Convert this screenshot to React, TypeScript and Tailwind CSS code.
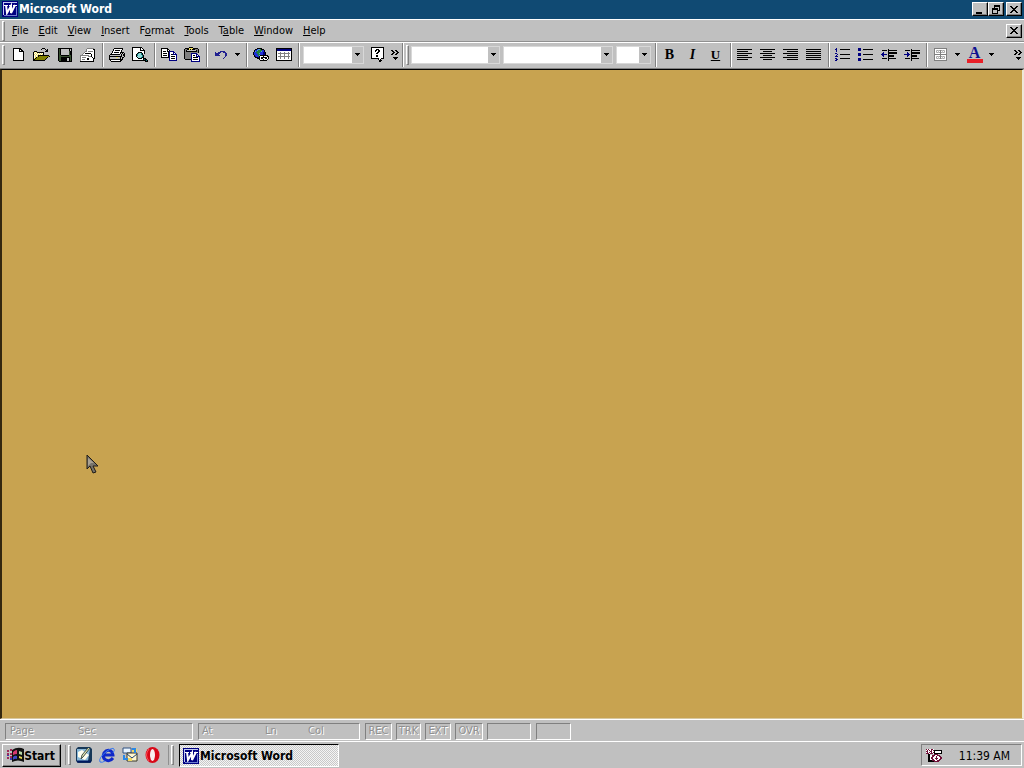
import React from "react";

const palette: Record<string, string> = {
  k: "#000000", w: "#ffffff", g: "#808080", s: "#c0c0c0", d: "#a8a8a8", y: "#f0e060", o: "#808000", v: "#385030",
  n: "#000080", b: "#2030d8", i: "#202090", t: "#107878", c: "#90d8d8", r: "#e01820", m: "#701038", l: "#50a0e0", e: "#208040",
};

function Pixels({ rows, className = "" }: { rows: string[]; className?: string }) {
  const w = Math.max(...rows.map((r) => r.length));
  return (
    <svg width={w} height={rows.length} viewBox={`0 0 ${w} ${rows.length}`} shapeRendering="crispEdges" className={`shrink-0 ${className}`} aria-hidden="true">
      {rows.flatMap((row, y) =>
        [...row].map((ch, x) => (palette[ch] ? <rect key={`${x}-${y}`} x={x} y={y} width="1" height="1" fill={palette[ch]} /> : null)),
      )}
    </svg>
  );
}

const art = {
  newDoc: ["kkkkkkkk", "kwwwwwkkk", "kwwwwwkwkk", "kwwwwwkkkkk", "kwwwwwwwwwk", "kwwwwwwwwwk", "kwwwwwwwwwk", "kwwwwwwwwwk", "kwwwwwwwwwk", "kwwwwwwwwwk", "kwwwwwwwwwk", "kwwwwwwwwwk", "kkkkkkkkkkk"],
  open: [".........kkk....", "........k...k.k.", ".............kk.", ".kkk........kkk.", "kywykkkkkkk.....", "kwywywywywk.....", "kywywywywyk.....", "kwywykkkkkkkkkkk", "kwywykooooooooook", "kwykooooooooook.", "kykooooooooook..", "kkooooooooook...", "kkkkkkkkkkkk...."],
  save: ["kkkkkkkkkkkkkk", "kvkssssssssksk", "kvkssssssssksk", "kvkssssssssvkk", "kvkssssssssvkk", "kvkssssssssvkk", "kvkssssssssvkk", "kvvkkkkkkkkvvk", "kvvvvvvvvvvvvk", "kvvkkkkkkkkkvk", "kvvkkkkkksskvk", "kvvkkkkkksskvk", "kvvkkkkkksskvk", ".kkkkkkkkkkkkk"],
  mail: [".......ggggggg..", "......gwwwwwwkk.", "......gwwwwwwwk.", ".....ggwgggggwk.", "....gwwwwwwwwwk.", "...gwkkkkkkwwwk.", "..gwwwwwwwwkwwk.", "gggggggggwwkwwk.", "gwwwwwwwgggkwwk.", "gwggggwwwwwwkwk.", "gwwwwwwkkwwwwkk.", "gwgggwwkkwwwwk..", "gwwwwwwwwwwwwk..", "kkkkkkkkkkkkkk.."],
  print: [".....kkkkkkkkk..", "....kwwwwwwwwk..", "....kwkkkkkwk...", "...kwwwwwwwwk...", "...kwkkkkkwkkkk.", "..kwwwwwwwwksksk", ".kkkkkkkkkkskskk", "kssssssssssskskk", "kkkkkkkkkkkkkssk", "kssssssyysskskk.", "kssssssssssksk..", "kkkkkkkkkkkkkk..", ".kwwwwwwwwwkk...", "..kkkkkkkkkk...."],
  preview: ["kkkkkkkkkk......", "kwwwwwwwkwk.....", "kwwwwwwwkwwk....", "kwwwwwwwkkkkk...", "kwwwwwwwwwwwk...", "kwwwwwkkkkwwk...", "kwwwwktcctkwk...", "kwwwktccctk.....", "kwwwktcccctk....", "kwwwkccccctk....", "kwwwwkccctkk....", "kwwwwwkkkkwkkk..", "kwwwwwwwwwwktkk.", "kkkkkkkkkkkkkktk", ".............kkk"],
  copy: ["kkkkkkk.........", "kwwwwwkk........", "kwwwwwkwk.......", "kwkkkwkknnnnn...", "kwwwwwwknwwwnn..", "kwkkkkwknwwwnwn.", "kwwwwwwknwkknnnn", "kwkkkkwknwwwwwwn", "kwwwwwwknwkkkkwn", "kkkkkkkknwwwwwwn", "........nwkkkkwn", "........nwwwwwwn", "........nnnnnnnn"],
  paste: [".....kkkk.......", ".kkkkyyyykkkkk..", "kggkkykykkkgggk.", "kgkssssssssskgk.", "kgkkkkkkkkkkkgk.", "kgggggggggggggk.", "kggggggnnnnnn...", "kggggggnwwwwnn..", "kggggggnwkkwnwn.", "kggggggnwwwwnnnn", "kggggggnwkkkkkwn", "kggggggnwwwwwwwn", ".kkkkkknwkkkkkwn", ".......nwwwwwwwn", ".......nnnnnnnnn"],
  undo: [".....iiiii..", "i..iii..iii.", "iiiii.....ii", "iiii......ii", "iiiii.....ii", "..........i.", ".........i..", "........i..."],
  globe: ["....kkkkk.......", "..kkbllekkk.....", ".kbbleeeebbk....", ".klbeeeelbbk....", "kbbeeeebbbnnk...", "kbbbeelbbbnnk...", "kbbbbeebbbnnk...", ".kbbbelkkkkkkkk.", ".knbbbkwwwkwwwkk", "..kkknkwkkkkkkwk", "....kkkwkkwwkkwk", "......kwwwkwwwk.", ".......kkkkkkk.."],
  table: ["kkkkkkkkkkkkkkkk", "knnnnnnnnnnnnnnk", "knnnnnnnnnnnnnnk", "kwwwwwwwwwwwwwwk", "kwwwgwwwgwwwgwwk", "kwggggggggggggwk", "kwwwgwwwgwwwgwwk", "kwwwgwwwgwwwgwwk", "kwggggggggggggwk", "kwwwgwwwgwwwgwwk", "kwwwgwwwgwwwgwwk", "kwwwwwwwwwwwwwwk", "kkkkkkkkkkkkkkkk"],
  help: ["kkkkkkkkkkkkk", "kwwwwwwwwwwwk", "kwwwwkkkwwwwk", "kwwwkkwkkwwwk", "kwwwkwwkkwwwk", "kwwwwwkkwwwwk", "kwwwwkkwwwwwk", "kwwwwwwwwwwwk", "kwwwwkkwwwwwk", "kwwwwkkwwwwwk", "kwwwwwwwwwwwk", "kkkkkkkkwwkkk", ".......kwk...", "........kkk..", "........kk..."],
  numbers: [".n..............", "nn...kkkkkkkkkk.", ".n..............", ".n..............", "................", "nn..............", "..n..kkkkkkkkkk.", ".n..............", "nnn.............", "................", "nn...kkkkkkkkkk.", ".nn.............", "nn.............."],
  bullets: ["nnn.............", "nnn..kkkkkkkkkk.", "nnn.............", "................", "................", "nnn.............", "nnn..kkkkkkkkkk.", "nnn.............", "................", "................", "nnn.............", "nnn..kkkkkkkkkk.", "nnn............."],
  outdent: [".......k........", ".kkkkk.kkkkkkkkk", ".......k........", "..n....kkkkkkkkk", ".nn....kkkkkkkkk", "nnnnnn.k........", ".nn....kkkkkk...", "..n....kkkkkk...", ".......k........", ".kkkkk.kkkkkkkk.", ".......k........", ".......k........"],
  indent: [".......k........", ".kkkkk.kkkkkkkkk", ".......k........", "...n...kkkkkkkkk", "...nn..kkkkkkkkk", "nnnnnn.k........", "...nn..kkkkkk...", "...n...kkkkkk...", ".......k........", ".kkkkk.kkkkkkkk.", ".......k........", ".......k........"],
  borders: ["ggggggggggggg", "gwwwwwwwwwwwg", "gwsdsdgdsdswg", "gwdwswgwswdwg", "gwsdsdgdsdswg", "gwwwwwgwwwwwg", "ggggggggggggg", "gwwwwwgwwwwwg", "gwsdsdgdsdswg", "gwdwswgwswdwg", "gwsdsdgdsdswg", "gwwwwwwwwwwwg", "ggggggggggggg"],
  down: ["kkkkk", ".kkk.", "..k.."],
  more: ["kk..kk..", ".kk..kk.", "..kk..kk", ".kk..kk.", "kk..kk..", "........", "........", "..kkkkk.", "...kkk..", "....k..."],
  close: ["kk....kk", ".kk..kk.", "..kkkk..", "...kk...", "..kkkk..", ".kk..kk.", "kk....kk"],
  restore: ["..kkkkkk", "..kkkkkk", "..k....k", "kkkkkk.k", "kkkkkk.k", "k....kkk", "k....k..", "k....k..", "kkkkkk.."],
  tray: ["mwmwwmmw........", "wmwmwmwmkkkkkkkk", "mmwwmmwwkwwwwwwk", "wmwmwmwmkwwwwwwk", "mmmwmmmwkkkkkkkk", "..kk....mmmm....", "..kkwwmmmwwmmm..", "..kkwwmmwwmwwmm.", "..kkwmmwwwmwwwmm", "..kkwmmwwmmmwwmm", "..kkwwmmwwmwwmm.", "..kkkkmmmwwmmm..", "..kkkkkkmmmmm..."],
};

function WordLogo() {
  return (
    <svg width="16" height="16" viewBox="0 0 16 16" className="shrink-0" aria-hidden="true">
      <path fill="#000080" d="M0 0h16v16H0z" />
      <path fill="#c0c8f0" d="M1 1h14v1H1zM1 2h1v12H1z" />
      <path fill="none" stroke="#fff" strokeWidth="2" d="M4 4l1 8 4-7v7l4-8" />
      <path fill="#fff" d="M2 4h4v1H2zM7 4h3v1H7zM11 4h4v1h-4z" />
      <path stroke="#7080d0" d="M2 14.5h13M14.5 6v9" />
    </svg>
  );
}

function Tool({ label, children, narrow = false }: { label: string; children: React.ReactNode; narrow?: boolean }) {
  return <button type="button" aria-label={label} className={`flex h-6 shrink-0 items-center justify-center ${narrow ? "w-[11px]" : "w-[23px]"}`}>{children}</button>;
}
const Sep = () => <div className="ml-[3px] mr-px h-6 w-[2px] shrink-0 border-l border-r border-l-[#808080] border-r-white" />;
const Grip = () => <div className="mx-[2px] h-5 w-[3px] shrink-0 border border-b-[#808080] border-l-white border-r-[#808080] border-t-white" />;

function Combo({ label, className }: { label: string; className: string }) {
  return (
    <div className={`relative h-[18px] shrink-0 border border-[#d8d8d8] bg-white ${className}`}>
      <select aria-label={label} className="block h-full w-full appearance-none bg-transparent"><option value="" /></select>
      <span className="pointer-events-none absolute inset-y-0 right-0 flex w-[11px] items-center justify-center bg-[#c0c0c0]"><Pixels rows={art.down} /></span>
    </div>
  );
}

function Align({ widths, mode }: { widths: number[]; mode: "start" | "middle" | "end" }) {
  return (
    <svg width="15" height="11" viewBox="0 0 15 11" shapeRendering="crispEdges" aria-hidden="true">
      {widths.map((w, i) => <rect key={i} x={mode === "start" ? 0 : mode === "end" ? 15 - w : (15 - w) / 2} y={i * 2} width={w} height="1" fill="#000" />)}
    </svg>
  );
}

const raised = "flex shrink-0 items-center justify-center border border-b-black border-l-white border-r-black border-t-white bg-[#c0c0c0] shadow-[inset_-1px_-1px_0_#808080]";

const menus: [string, string, string][] = [["", "F", "ile"], ["", "E", "dit"], ["", "V", "iew"], ["", "I", "nsert"], ["F", "o", "rmat"], ["", "T", "ools"], ["T", "a", "ble"], ["", "W", "indow"], ["", "H", "elp"]];

function Pane({ children, className }: { children?: React.ReactNode; className: string }) {
  return <div className={`flex h-[17px] shrink-0 items-center border border-b-white border-l-[#808080] border-r-white border-t-[#808080] ${className}`}>{children}</div>;
}

export default function App() {
  return (
    <div className="flex h-screen flex-col overflow-hidden bg-[#c0c0c0] font-['DejaVu_Sans_Condensed','DejaVu_Sans',sans-serif] text-[11px] leading-4 text-black">
      <header className="flex h-[19px] shrink-0 items-center bg-[#104a73] pb-px pl-[2px] pr-[2px] text-white">
        <WordLogo />
        <h1 className="ml-px text-[12px] font-bold">Microsoft Word</h1>
        <div className="ml-auto flex">
          <button type="button" aria-label="Minimize" className={`${raised} h-[14px] w-4`}><span className="mr-[2px] mt-[7px] h-[2px] w-[6px] bg-black" /></button>
          <button type="button" aria-label="Restore" className={`${raised} h-[14px] w-4`}><Pixels rows={art.restore} /></button>
          <button type="button" aria-label="Close" className={`${raised} ml-[2px] h-[14px] w-4`}><Pixels rows={art.close} /></button>
        </div>
      </header>
      <nav aria-label="Menu bar" className="flex h-[23px] shrink-0 items-center border-b border-t border-b-[#909090] border-t-white pr-[2px]">
        <Grip />
        <div className="ml-[5px] flex gap-[10px] pt-px">
          {menus.map(([a, u, b]) => <button type="button" key={a + u + b}>{a}<span className="underline underline-offset-1">{u}</span>{b}</button>)}
        </div>
        <button type="button" aria-label="Close document" className={`${raised} ml-auto h-[14px] w-4`}><Pixels rows={art.close} /></button>
      </nav>
      <div role="toolbar" aria-label="Standard and formatting" className="flex h-[27px] shrink-0 items-center border-b border-t border-b-[#808080] border-t-white pb-[2px]">
        <Grip />
        <Tool label="New"><Pixels rows={art.newDoc} /></Tool>
        <Tool label="Open"><Pixels rows={art.open} /></Tool>
        <Tool label="Save"><Pixels rows={art.save} /></Tool>
        <Tool label="E-mail"><Pixels rows={art.mail} /></Tool>
        <Sep />
        <Tool label="Print"><Pixels rows={art.print} /></Tool>
        <Tool label="Print preview"><Pixels rows={art.preview} /></Tool>
        <Sep />
        <Tool label="Copy"><Pixels rows={art.copy} /></Tool>
        <Tool label="Paste"><Pixels rows={art.paste} /></Tool>
        <Sep />
        <Tool label="Undo"><Pixels rows={art.undo} /></Tool>
        <Tool label="Undo list" narrow><Pixels rows={art.down} /></Tool>
        <Sep />
        <Tool label="Insert hyperlink"><Pixels rows={art.globe} /></Tool>
        <Tool label="Tables"><Pixels rows={art.table} /></Tool>
        <Sep />
        <div className="flex shrink-0 items-center gap-[2px] pl-[2px]">
          <Combo label="Zoom" className="w-[61px]" />
          <Tool label="Help"><Pixels rows={art.help} /></Tool>
        </div>
        <Tool label="More standard buttons" narrow><Pixels rows={art.more} /></Tool>
        <div className="ml-[2px] h-6 w-[2px] shrink-0 border-l border-r border-l-[#808080] border-r-white" />
        <Grip />
        <div className="mr-px flex shrink-0 items-center gap-[3px]">
          <Combo label="Style" className="w-[89px]" />
          <Combo label="Font" className="w-[110px]" />
          <Combo label="Font size" className="w-[35px]" />
        </div>
        <Sep />
        <Tool label="Bold"><span className="font-['Liberation_Serif',serif] text-[14px] font-black">B</span></Tool>
        <Tool label="Italic"><span className="font-['Liberation_Serif',serif] text-[14px] font-bold italic">I</span></Tool>
        <Tool label="Underline"><span className="font-['Liberation_Serif',serif] text-[13px] font-bold underline">U</span></Tool>
        <Sep />
        <Tool label="Align left"><Align widths={[15, 11, 15, 11, 15, 11]} mode="start" /></Tool>
        <Tool label="Center"><Align widths={[15, 9, 15, 9, 15, 9]} mode="middle" /></Tool>
        <Tool label="Align right"><Align widths={[15, 11, 15, 11, 15, 11]} mode="end" /></Tool>
        <Tool label="Justify"><Align widths={[15, 15, 15, 15, 15, 15]} mode="start" /></Tool>
        <Sep />
        <Tool label="Numbering"><Pixels rows={art.numbers} /></Tool>
        <Tool label="Bullets"><Pixels rows={art.bullets} /></Tool>
        <Tool label="Decrease indent"><Pixels rows={art.outdent} /></Tool>
        <Tool label="Increase indent"><Pixels rows={art.indent} /></Tool>
        <Sep />
        <Tool label="Borders"><Pixels rows={art.borders} /></Tool>
        <Tool label="Border list" narrow><Pixels rows={art.down} /></Tool>
        <Tool label="Font color"><span className="w-4 border-b-4 border-[#e82028] font-['Liberation_Serif',serif] text-[16px] font-bold leading-3 text-[#101090]">A</span></Tool>
        <Tool label="Color list" narrow><Pixels rows={art.down} /></Tool>
        <div className="ml-auto mr-px"><Tool label="More formatting buttons" narrow><Pixels rows={art.more} /></Tool></div>
      </div>
      <main className="relative flex-1 border-b border-l-2 border-r-2 border-t border-b-[#d8c8a0] border-l-[#33270f] border-r-[#eee8d8] border-t-black bg-[#c8a350]">
        <svg className="absolute left-[84px] top-[384px]" width="13" height="21" viewBox="0 0 13 21" aria-hidden="true">
          <path d="M1 1v14l3-3 3 7 3-1-3-6h5z" fill="#77736a" stroke="#201c18" />
          <path d="M2 4v8l3-3h3z" fill="#aaa294" />
        </svg>
      </main>
      <footer className="flex h-[23px] shrink-0 items-center border-b border-t border-white pl-[5px] pt-px text-[#909090] [text-shadow:1px_1px_0_#fff]">
        <Pane className="w-[188px] pl-1"><span className="w-[68px]">Page</span><span>Sec</span></Pane>
        <Pane className="ml-[5px] w-[162px] pl-[3px]"><span className="w-[63px]">At</span><span className="w-[43px]">Ln</span><span>Col</span></Pane>
        <div className="ml-[5px] flex gap-1">
          <Pane className="w-[27px] justify-center">REC</Pane>
          <Pane className="w-[25px] justify-center">TRK</Pane>
          <Pane className="w-[26px] justify-center">EXT</Pane>
          <Pane className="w-[28px] justify-center">OVR</Pane>
          <Pane className="w-[44px]" />
        </div>
        <Pane className="ml-[5px] w-[35px]" />
      </footer>
      <div className="flex h-[26px] shrink-0 items-center pl-[2px] pr-[2px]">
        <button type="button" className={`${raised} h-[23px] w-[59px] pr-px text-[12px] font-bold`}>
          <svg width="17" height="16" viewBox="0 0 17 16" aria-hidden="true">
            <path d="M0 3h2v2H0zM3 2h2v2H3zM0 6h2v2H0zM3 6h2v2H3zM0 10h2v2H0zM3 9h2v2H3z" fill="#a02858" />
            <path d="M0 8h2v1H0zM3 11h2v2H3z" fill="#3838b0" />
            <path d="M5 3q6-4 12-1v13q-6-3-12 0z" fill="#111" />
            <path d="M6 5q2-2 4-2v4q-2 0-4 1z" fill="#d83870" /><path d="M12 4l3 1v3l-3-1z" fill="#b8d8a8" />
            <path d="M6 10q2-2 4-1v3q-2-1-4 1z" fill="#4048c8" /><path d="M12 9l3 1v2l-3-1z" fill="#e8d850" />
          </svg>
          <span className="pt-px">Start</span>
        </button>
        <div className="ml-1 flex items-center"><div className="h-5 w-px bg-[#909090]" /><Grip /></div>
        <nav aria-label="Quick launch" className="flex items-center gap-[7px] pl-[3px]">
          <button type="button" aria-label="Show desktop">
            <svg width="16" height="16" viewBox="0 0 16 16"><path fill="#183858" d="M0 2l2-2h12l2 2v12l-2 2H2l-2-2z" /><path fill="#88b8d8" d="M1 2h13L12 14H1z" /><path fill="#fffff0" d="M2 5l4-2 7 5-4 5-7-3z" /><path d="M14 1L7 10l-2 2 1-4 6-7" fill="#e8e8b0" stroke="#405048" /><path d="M1 14.5h14" stroke="#001860" strokeWidth="2" /></svg>
          </button>
          <button type="button" aria-label="Internet Explorer">
            <svg width="16" height="16" viewBox="0 0 16 16" fill="none"><path stroke="#1028c8" strokeWidth="3" d="M14 11q-3 4-7 2-4-2-2-7 3-4 7-2 2 2 2 4H5" /><path stroke="#3878f0" d="M1 15q-2-4 7-11 6-4 7-2 1 1-1 4M1 15q2 1 5-1" /></svg>
          </button>
          <button type="button" aria-label="Outlook Express">
            <svg width="16" height="16" viewBox="0 0 16 16"><path fill="#e8f4ff" stroke="#305080" d="M1 1h8v5H1z" /><path fill="#fff8d0" stroke="#383828" d="M5 6h10v8H5z" /><path fill="#f0d860" d="M10 2h5v3h-5zM6 11h4v3H6z" /><path fill="none" stroke="#2888e8" strokeWidth="2" d="M2 8v4h4M10 2h3v4" /><path fill="none" stroke="#204070" d="M5 7l5 4 5-4" /></svg>
          </button>
          <button type="button" aria-label="Opera">
            <svg width="15" height="16" viewBox="0 0 15 16"><ellipse cx="7.5" cy="8" rx="7" ry="8" fill="#d80818" /><ellipse cx="7.5" cy="8" rx="2.5" ry="6" fill="#f8f0f0" /><path d="M4 2q-5 6 0 12" fill="none" stroke="#ff5058" /></svg>
          </button>
        </nav>
        <div className="ml-2 flex items-center"><div className="h-5 w-px bg-[#909090]" /><Grip /></div>
        <button type="button" className="ml-[3px] flex h-[23px] w-40 items-center border border-b-white border-l-black border-r-white border-t-black bg-[#e0e0e0] bg-[repeating-conic-gradient(#c8c8c8_0_25%,#f4f4f4_0_50%)] bg-[length:2px_2px] pl-[3px] pt-px text-[12px] font-bold">
          <WordLogo /><span className="ml-px">Microsoft Word</span>
        </button>
        <div className="ml-auto flex h-[22px] w-[101px] items-center border border-b-white border-l-[#808080] border-r-white border-t-[#808080] pl-1">
          <Pixels rows={art.tray} />
          <time className="ml-auto pr-[11px] pt-[2px] text-[12px]">11:39 AM</time>
        </div>
      </div>
    </div>
  );
}
